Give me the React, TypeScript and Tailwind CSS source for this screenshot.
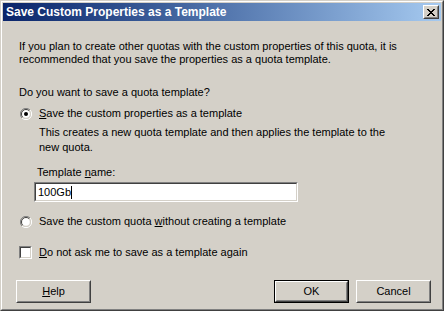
import React from 'react';

const font = { fontFamily: '"Liberation Sans", Arial, sans-serif' };

const Raised: React.FC<{ children: React.ReactNode; isDefault?: boolean }> = ({ children, isDefault }) => {
  const inner = (
    <div className="w-full h-full border border-t-white border-l-white border-r-[#404040] border-b-[#404040]">
      <div className="w-full h-full border border-t-[#d4d0c8] border-l-[#d4d0c8] border-r-[#808080] border-b-[#808080] flex items-center justify-center">
        {children}
      </div>
    </div>
  );
  if (isDefault) {
    return <div className="w-[75px] h-[23px] border border-black">{inner}</div>;
  }
  return <div className="w-[75px] h-[23px]">{inner}</div>;
};

const Radio: React.FC<{ checked?: boolean }> = ({ checked }) => (
  <svg width="12" height="12" viewBox="0 0 12 12" className="shrink-0">
    <path d="M2 10 A5.5 5.5 0 0 1 10 2" stroke="#808080" strokeWidth="1" fill="none" />
    <path d="M10 2 A5.5 5.5 0 0 1 2 10" stroke="#ffffff" strokeWidth="1" fill="none" />
    <path d="M2.8 9.2 A4.4 4.4 0 0 1 9.2 2.8" stroke="#404040" strokeWidth="1" fill="none" />
    <path d="M9.2 2.8 A4.4 4.4 0 0 1 2.8 9.2" stroke="#d4d0c8" strokeWidth="1" fill="none" />
    <circle cx="6" cy="6" r="3.8" fill="#ffffff" />
    {checked && <circle cx="6" cy="6" r="2" fill="#000000" />}
  </svg>
);

const Sunken: React.FC<{ className: string; children?: React.ReactNode }> = ({ className, children }) => (
  <div className={`border border-t-[#808080] border-l-[#808080] border-r-white border-b-white ${className}`}>
    <div className="w-full h-full border border-t-[#404040] border-l-[#404040] border-r-[#d4d0c8] border-b-[#d4d0c8] bg-white">
      {children}
    </div>
  </div>
);

export default function App() {
  return (
    <div className="w-[444px] h-[311px] bg-[#d4d0c8] text-[11px] leading-[13px] text-black" style={font}>
      <div className="w-full h-full border border-t-[#d4d0c8] border-l-[#d4d0c8] border-r-[#404040] border-b-[#404040]">
        <div className="w-full h-full border border-t-white border-l-white border-r-[#808080] border-b-[#808080] p-px flex flex-col">
          <div className="h-[18px] shrink-0 flex items-center justify-between bg-gradient-to-r from-[#0a246a] to-[#a6caf0] pl-[3px] pr-[2px]">
            <span className="text-white font-bold text-[12px]">Save Custom Properties as a Template</span>
            <div className="w-[16px] h-[14px] border border-t-white border-l-white border-r-[#404040] border-b-[#404040]">
              <div className="w-full h-full bg-[#d4d0c8] border border-t-[#d4d0c8] border-l-[#d4d0c8] border-r-[#808080] border-b-[#808080] flex items-center justify-center">
                <svg width="8" height="7" viewBox="0 0 8 7">
                  <path d="M0 0h2v1h1v1h2v-1h1v-1h2v1h-1v1h-1v1h-1v1h1v1h1v1h1v1h-2v-1h-1v-1h-2v1h-1v1h-2v-1h1v-1h1v-1h1v-1h-1v-1h-1v-1h-1z" fill="#000" />
                </svg>
              </div>
            </div>
          </div>
          <div className="flex-1 flex flex-col pl-[16px] pt-[19px] pr-[10px] pb-[5px]">
            <p>
              If you plan to create other quotas with the custom properties of this quota, it is
              <br />
              recommended that you save the properties as a quota template.
            </p>
            <p className="mt-[20px]">Do you want to save a quota template?</p>
            <div className="mt-[8px] flex items-center gap-[7px] pl-[1px]">
              <Radio checked />
              <span><u>S</u>ave the custom properties as a template</span>
            </div>
            <div className="pl-[20px]">
              <p className="mt-[5px] leading-[15px]">
                This creates a new quota template and then applies the template to the
                <br />
                new quota.
              </p>
              <p className="mt-[11px] -ml-[2px]">Template <u>n</u>ame:</p>
              <Sunken className="mt-[3px] -ml-[5px] w-[264px] h-[20px]">
                <div className="pl-[2px] pt-[2px] flex items-center">
                  <span>100Gb</span>
                  <span className="w-px h-[13px] bg-black" />
                </div>
              </Sunken>
            </div>
            <div className="mt-[13px] flex items-center gap-[7px] pl-[1px]">
              <Radio />
              <span>Save the custom quota <u>w</u>ithout creating a template</span>
            </div>
            <div className="mt-[18px] flex items-center gap-[7px]">
              <Sunken className="w-[13px] h-[13px]" />
              <span><u>D</u>o not ask me to save as a template again</span>
            </div>
            <div className="mt-auto -ml-[3px] flex items-end">
              <Raised><span><u>H</u>elp</span></Raised>
              <div className="flex-1" />
              <Raised isDefault><span>OK</span></Raised>
              <div className="w-[7px]" />
              <Raised><span>Cancel</span></Raised>
            </div>
          </div>
        </div>
      </div>
    </div>
  );
}
